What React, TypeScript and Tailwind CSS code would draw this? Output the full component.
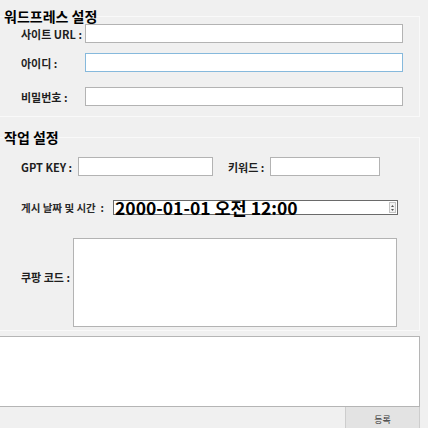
import React from 'react';

const boxCls = 'h-[19px] bg-white border outline-none px-1 text-[11px]';

const Label: React.FC<{ text: string; className?: string }> = ({ text, className }) => (
  <span className={`text-[11px] leading-[14px] font-bold text-[#1e1e1e] whitespace-nowrap ${className ?? ''}`}>{text}</span>
);

export default function App() {
  return (
    <div className="w-[428px] h-[428px] overflow-hidden bg-[#f0f0f0] font-['Noto_Sans_CJK_KR',sans-serif] text-black">
      {/* 워드프레스 설정 */}
      <fieldset className="mt-[9px] w-[420px] border border-l-0 border-[#f9f9f9] pb-[10px]">
        <legend className="ml-[4px] text-[14px] leading-[14px] font-bold">워드프레스 설정</legend>
        <div className="flex items-center mt-[1px]">
          <Label text="사이트 URL :" className="w-[85px] pl-[21px]" />
          <input readOnly className={`${boxCls} w-[318px] border-[#b3b3b3]`} />
        </div>
        <div className="flex items-center mt-[10px]">
          <Label text="아이디 :" className="w-[85px] pl-[21px]" />
          <input readOnly className={`${boxCls} w-[318px] border-[#86b9dc]`} />
        </div>
        <div className="flex items-center mt-[15px]">
          <Label text="비밀번호 :" className="w-[85px] pl-[21px]" />
          <input readOnly className={`${boxCls} w-[318px] border-[#b3b3b3]`} />
        </div>
      </fieldset>

      {/* 작업 설정 */}
      <fieldset className="mt-[13px] w-[420px] border border-l-0 border-[#f9f9f9] pb-[3px]">
        <legend className="ml-[4px] text-[14px] leading-[14px] font-bold">작업 설정</legend>
        <div className="flex items-center mt-[13px]">
          <Label text="GPT KEY :" className="w-[78px] pl-[21px]" />
          <input readOnly className={`${boxCls} w-[135px] h-[18px] border-[#b3b3b3]`} />
          <Label text="키워드 :" className="w-[42px] ml-[15px]" />
          <input readOnly className={`${boxCls} w-[110px] h-[18px] border-[#b3b3b3]`} />
        </div>
        <div className="flex items-center mt-[24px]">
          <span className="w-[113px] pl-[21px] text-[10.5px] leading-[14px] font-semibold text-[#2a2a2a] whitespace-nowrap">
            게시 날짜 및 시간 &nbsp;:
          </span>
          <div className="w-[285px] h-[15px] bg-white border border-[#6a6a6a] flex items-center">
            <span className="pl-[1px] text-[17.5px] leading-[15px] font-semibold whitespace-nowrap">2000-01-01 오전 12:00</span>
            <div className="ml-auto mr-[1px] w-[7px] h-[11px] border border-[#c4c4c4] bg-[#f3f3f3] flex flex-col items-center justify-center gap-[2px]">
              <svg width="3" height="2" viewBox="0 0 3 2"><path d="M1.5 0L3 2H0z" fill="#555" /></svg>
              <svg width="3" height="2" viewBox="0 0 3 2"><path d="M0 0h3L1.5 2z" fill="#555" /></svg>
            </div>
          </div>
        </div>
        <div className="flex items-center mt-[23px]">
          <Label text="쿠팡 코드 :" className="w-[73px] pl-[21px] mb-[12px]" />
          <textarea readOnly className="w-[324px] h-[89px] bg-white border border-[#b3b3b3] outline-none resize-none" />
        </div>
      </fieldset>

      {/* 로그 */}
      <textarea readOnly className="block mt-[5px] w-[420px] h-[71px] bg-white border border-l-0 border-[#b5b5b5] outline-none resize-none" />
      <div className="flex justify-end w-[420px]">
        <button className="w-[75px] h-[23px] bg-[#e3e3e3] border border-t-0 border-[#cdcdcd] text-[9px] leading-[9px] text-[#333] pt-[2px]">
          등록
        </button>
      </div>
    </div>
  );
}
